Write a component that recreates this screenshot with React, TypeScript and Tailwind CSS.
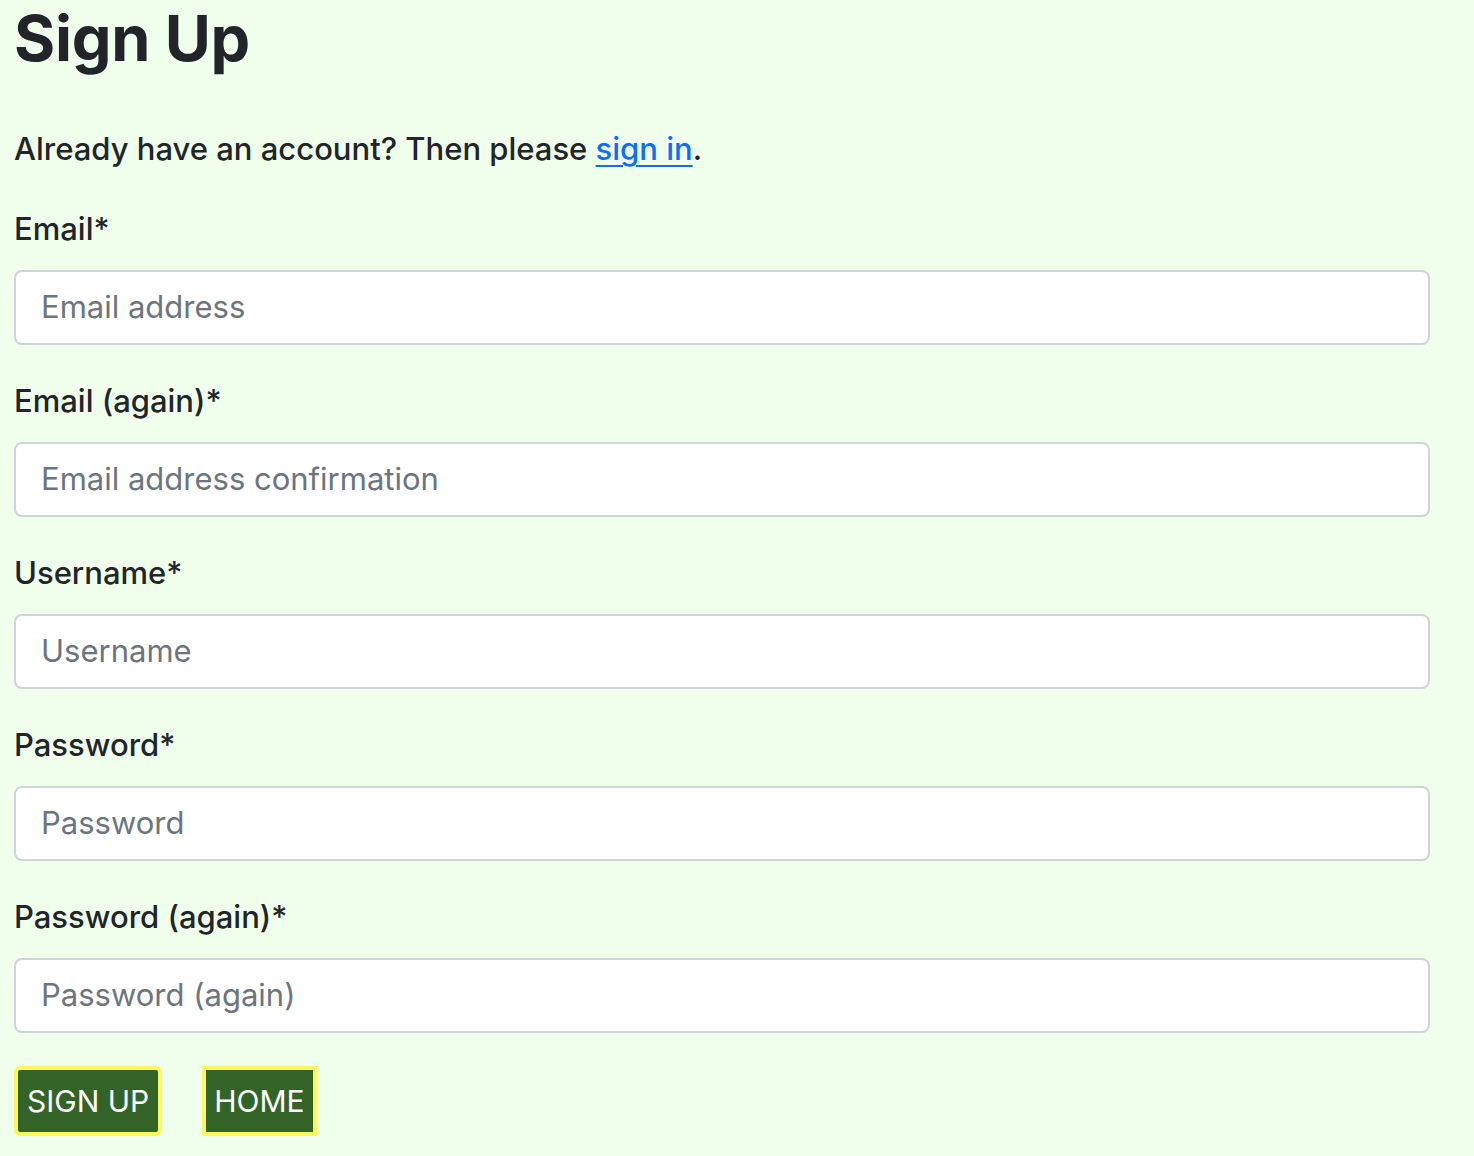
export default function App() {
  const fields = [
    { label: "Email*", ph: "Email address" },
    { label: "Email (again)*", ph: "Email address confirmation" },
    { label: "Username*", ph: "Username" },
    { label: "Password*", ph: "Password" },
    { label: "Password (again)*", ph: "Password (again)" },
  ];
  return (
    <div
      className="min-h-[1156px] w-full bg-[#f0ffeb] text-[#212529] px-[14px] font-[450]"
      style={{ fontFamily: "Inter, 'Noto Sans', sans-serif" }}
    >
      <h1 className="text-[63px] font-bold leading-[76px] tracking-[-0.3px]">Sign Up</h1>
      <p className="mt-[50px] text-[31px] leading-[46px]">
        Already have an account? Then please{" "}
        <a href="#" className="text-[#0d6efd] underline underline-offset-[5px] decoration-2">sign in</a>.
      </p>
      <div className="w-[1416px]">
        {fields.map((f, i) => (
          <div key={f.label} className={i === 0 ? "mt-[34px]" : "mt-[33px]"}>
            <label className="block text-[31px] leading-[46px]">{f.label}</label>
            <div className="mt-[18px] h-[75px] rounded-[8px] border-2 border-[#ced4da] bg-white flex items-center px-[25px]">
              <span className="text-[31px] text-[#6c757d] font-normal">{f.ph}</span>
            </div>
          </div>
        ))}
      </div>
      <div className="mt-[33px] flex gap-[40px]">
        <button className="h-[70px] px-[9px] rounded-[6px] border-[4px] border-[#fbf95a] bg-[#336327] text-white text-[30px] font-normal">
          SIGN UP
        </button>
        <button className="h-[70px] px-[8px] border-[4px] border-[#fbf95a] bg-[#336327] text-white text-[30px] font-normal">
          HOME
        </button>
      </div>
    </div>
  );
}
